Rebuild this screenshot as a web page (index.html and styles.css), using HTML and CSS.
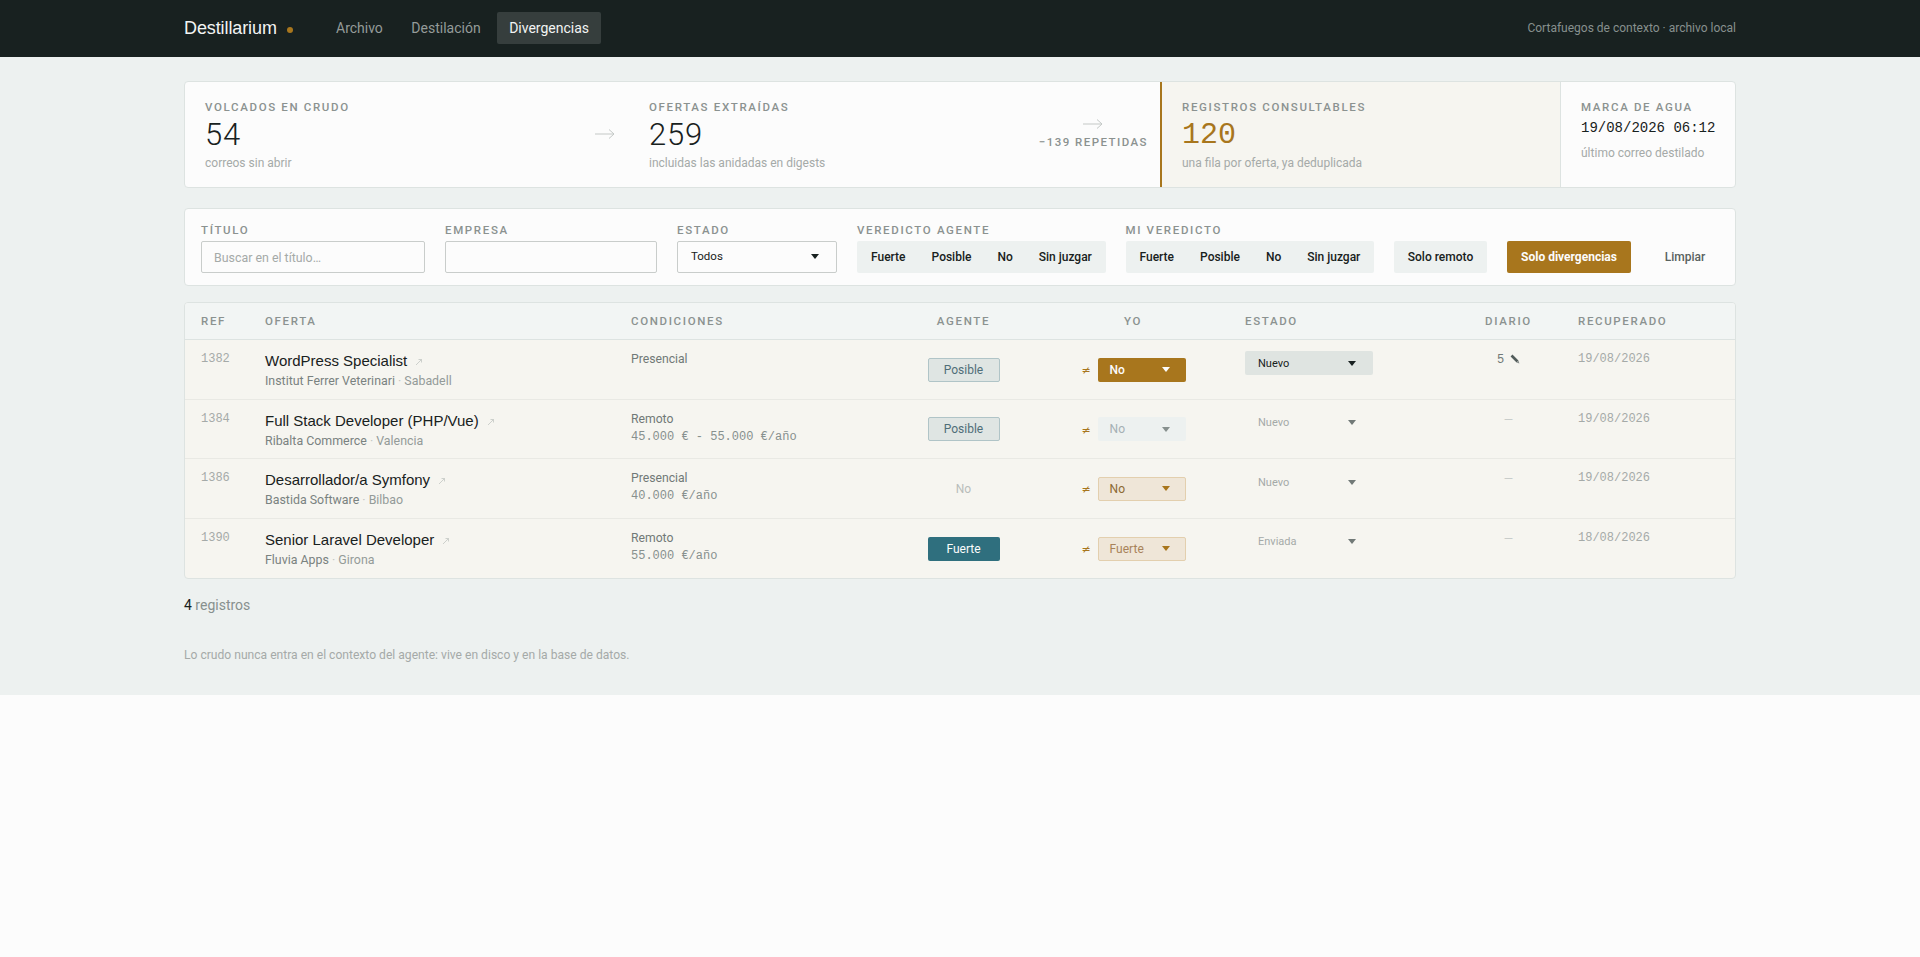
FILE: index.html
```html
<!DOCTYPE html>
<html lang="es">
<head>
<meta charset="utf-8">
<title>Destillarium</title>
<link rel="stylesheet" href="styles.css">
</head>
<body>
<header class="topbar">
  <div class="wrap topbar-in">
    <a class="brand">Destillarium<span class="brand-dot"></span></a>
    <nav class="nav">
      <a class="nav-link">Archivo</a>
      <a class="nav-link">Destilación</a>
      <a class="nav-link is-active">Divergencias</a>
    </nav>
    <span class="tagline">Cortafuegos de contexto · archivo local</span>
  </div>
</header>
<main class="main">
  <div class="wrap">
    <section class="stats">
      <div class="stat stat-a">
        <div class="label">Volcados en crudo</div>
        <div class="num">54</div>
        <div class="hint">correos sin abrir</div>
      </div>
      <div class="flow flow-a">
        <svg class="arrow" viewBox="0 0 20 12" width="20" height="12"><path d="M0 6h19M14 1.5l5 4.5-5 4.5" fill="none" stroke="#c4c8c6" stroke-width="1"/></svg>
      </div>
      <div class="stat stat-b">
        <div class="label">Ofertas extraídas</div>
        <div class="num">259</div>
        <div class="hint">incluidas las anidadas en digests</div>
      </div>
      <div class="flow flow-b">
        <svg class="arrow" viewBox="0 0 20 12" width="20" height="12"><path d="M0 6h19M14 1.5l5 4.5-5 4.5" fill="none" stroke="#c4c8c6" stroke-width="1"/></svg>
        <div class="repeated">−139 repetidas</div>
      </div>
      <div class="stat stat-c">
        <div class="label">Registros consultables</div>
        <div class="num num-mono">120</div>
        <div class="hint">una fila por oferta, ya deduplicada</div>
      </div>
      <div class="stat stat-d">
        <div class="label">Marca de agua</div>
        <div class="mark">19/08/2026 06:12</div>
        <div class="hint">último correo destilado</div>
      </div>
    </section>

    <section class="filters">
      <div class="field f-title">
        <label class="label">Título</label>
        <input class="input" placeholder="Buscar en el título…">
      </div>
      <div class="field f-company">
        <label class="label">Empresa</label>
        <input class="input">
      </div>
      <div class="field f-state">
        <label class="label">Estado</label>
        <div class="select-box"><span>Todos</span><i class="tri"></i></div>
      </div>
      <div class="field f-seg">
        <label class="label">Veredicto agente</label>
        <div class="seg"><span>Fuerte</span><span>Posible</span><span>No</span><span>Sin juzgar</span></div>
      </div>
      <div class="field f-seg">
        <label class="label">Mi veredicto</label>
        <div class="seg"><span>Fuerte</span><span>Posible</span><span>No</span><span>Sin juzgar</span></div>
      </div>
      <button class="btn">Solo remoto</button>
      <button class="btn btn-on">Solo divergencias</button>
      <button class="btn btn-plain">Limpiar</button>
    </section>

    <section class="table-card">
      <table class="table">
        <colgroup>
          <col class="c-ref"><col class="c-offer"><col class="c-cond"><col class="c-agent"><col class="c-me"><col class="c-state"><col class="c-log"><col class="c-date">
        </colgroup>
        <thead>
          <tr>
            <th>Ref</th><th>Oferta</th><th>Condiciones</th><th class="ta-c">Agente</th><th class="ta-c th-me">Yo</th><th>Estado</th><th class="ta-c">Diario</th><th>Recuperado</th>
          </tr>
        </thead>
        <tbody>
          <tr>
            <td class="mono dim">1382</td>
            <td><div class="title">WordPress Specialist<svg class="ext" viewBox="0 0 8 8" width="8" height="8"><path d="M1 7l5.5-5.5M3.5 1.5h3v3" fill="none" stroke="#c3c6c3" stroke-width=".8"/></svg></div><div class="sub">Institut Ferrer Veterinari <em>·</em> <b>Sabadell</b></div></td>
            <td><div class="cond">Presencial</div></td>
            <td class="ta-c va-m"><span class="pill pill-possible">Posible</span></td>
            <td class="va-m"><div class="me"><span class="ne">≠</span><span class="vsel vsel-solid"><span>No</span><i class="tri"></i></span></div></td>
            <td><span class="ssel ssel-on"><span>Nuevo</span><i class="tri"></i></span></td>
            <td class="ta-c log"><span class="log-n">5</span><svg class="pen" viewBox="0 0 10 10" width="10" height="10"><path d="M1.5 1.5L7.5 7.5" fill="none" stroke="#525c5a" stroke-width="2.6"/><path d="M6.5 8.4l2-2 .9 3z" fill="#8a908e"/></svg></td>
            <td class="mono date">19/08/2026</td>
          </tr>
          <tr>
            <td class="mono dim">1384</td>
            <td><div class="title">Full Stack Developer (PHP/Vue)<svg class="ext" viewBox="0 0 8 8" width="8" height="8"><path d="M1 7l5.5-5.5M3.5 1.5h3v3" fill="none" stroke="#c3c6c3" stroke-width=".8"/></svg></div><div class="sub">Ribalta Commerce <em>·</em> <b>Valencia</b></div></td>
            <td><div class="cond">Remoto</div><div class="salary">45.000 € - 55.000 €/año</div></td>
            <td class="ta-c va-m"><span class="pill pill-possible">Posible</span></td>
            <td class="va-m"><div class="me"><span class="ne">≠</span><span class="vsel vsel-muted"><span>No</span><i class="tri"></i></span></div></td>
            <td><span class="ssel"><span>Nuevo</span><i class="tri"></i></span></td>
            <td class="ta-c log-none">—</td>
            <td class="mono date">19/08/2026</td>
          </tr>
          <tr>
            <td class="mono dim">1386</td>
            <td><div class="title">Desarrollador/a Symfony<svg class="ext" viewBox="0 0 8 8" width="8" height="8"><path d="M1 7l5.5-5.5M3.5 1.5h3v3" fill="none" stroke="#c3c6c3" stroke-width=".8"/></svg></div><div class="sub">Bastida Software <em>·</em> <b>Bilbao</b></div></td>
            <td><div class="cond">Presencial</div><div class="salary">40.000 €/año</div></td>
            <td class="ta-c va-m"><span class="pill pill-none">No</span></td>
            <td class="va-m"><div class="me"><span class="ne">≠</span><span class="vsel vsel-soft"><span>No</span><i class="tri"></i></span></div></td>
            <td><span class="ssel"><span>Nuevo</span><i class="tri"></i></span></td>
            <td class="ta-c log-none">—</td>
            <td class="mono date">19/08/2026</td>
          </tr>
          <tr>
            <td class="mono dim">1390</td>
            <td><div class="title">Senior Laravel Developer<svg class="ext" viewBox="0 0 8 8" width="8" height="8"><path d="M1 7l5.5-5.5M3.5 1.5h3v3" fill="none" stroke="#c3c6c3" stroke-width=".8"/></svg></div><div class="sub">Fluvia Apps <em>·</em> <b>Girona</b></div></td>
            <td><div class="cond">Remoto</div><div class="salary">55.000 €/año</div></td>
            <td class="ta-c va-m"><span class="pill pill-strong">Fuerte</span></td>
            <td class="va-m"><div class="me"><span class="ne">≠</span><span class="vsel vsel-soft vsel-soft-fuerte"><span>Fuerte</span><i class="tri"></i></span></div></td>
            <td><span class="ssel"><span>Enviada</span><i class="tri"></i></span></td>
            <td class="ta-c log-none">—</td>
            <td class="mono date">18/08/2026</td>
          </tr>
        </tbody>
      </table>
    </section>

    <p class="count"><strong>4</strong> registros</p>
    <p class="note">Lo crudo nunca entra en el contexto del agente: vive en disco y en la base de datos.</p>
  </div>
</main>
</body>
</html>
```

FILE: styles.css
```css
* { box-sizing: border-box; }
html, body { margin: 0; padding: 0; }
body {
  background: #fcfcfc;
  color: #182120;
  font-family: Roboto, "Noto Sans", sans-serif;
  font-size: 13px;
}
.wrap { width: 1552px; margin: 0 auto; }

.topbar { background: #182120; height: 57px; }
.topbar-in { display: flex; align-items: center; height: 56px; }
.brand {
  font-family: "Liberation Sans", sans-serif;
  font-size: 18px;
  letter-spacing: -0.1px;
  color: #f2f4f3;
  width: 140px;
  display: flex;
  align-items: center;
}
.brand-dot { width: 6px; height: 6px; border-radius: 50%; background: #a8761d; margin: 4px 0 0 10px; }
.nav { display: flex; gap: 4.5px; flex: 1; font-size: 14px; }
.nav-link { color: #949b99; padding: 0 12px; height: 32px; line-height: 32px; border-radius: 2px; }
.nav-link.is-active { background: #363e3d; color: #f2f4f3; }
.tagline { color: #87908e; font-size: 12px; }

.main { background: #edf1f0; padding: 24px 0 32px; height: 638px; }

.stats {
  display: flex;
  height: 107px;
  background: #fcfcfc;
  border: 1px solid #dde3e1;
  border-radius: 4px;
  overflow: hidden;
}
.stat { padding: 18px 0 0 20px; }
.stat-a { width: 400px; }
.flow-a { width: 64px; padding: 46px 0 0 10px; }
.stat-b { width: 0; flex: 1; padding-left: 0; }
.flow-b { width: 122px; padding-top: 36px; display: flex; flex-direction: column; align-items: flex-end; padding-right: 12px; }
.flow-b .arrow { margin-right: 45px; }
.stat-c { width: 400px; background: #f6f5f0; border-left: 2px solid #a8761d; }
.stat-d { width: 175px; border-left: 1px solid #dde3e1; }
.label, .repeated {
  font-size: 11.5px;
  font-weight: 500;
  letter-spacing: 1.65px;
  text-transform: uppercase;
  color: #8b9290;
  line-height: 14px;
}
.label { display: block; }
.num { font-size: 31px; font-weight: 300; letter-spacing: 0.8px; line-height: 38px; margin-top: 2px; color: #182120; }
.num-mono { font-family: "Liberation Mono", monospace; font-size: 30px; font-weight: 400; letter-spacing: 0; color: #a8761d; }
.mark { font-family: "Liberation Mono", monospace; font-size: 14px; line-height: 20px; margin-top: 4px; color: #182120; height: 24px; }
.stat-d .hint { margin-top: 3px; }
.hint { font-size: 12px; color: #a5aaa8; line-height: 16px; margin-top: 1px; }
.repeated { margin-top: 5px; letter-spacing: 1.45px; white-space: nowrap; }

.filters {
  display: flex;
  align-items: flex-end;
  gap: 20px;
  height: 78px;
  margin-top: 20px;
  padding: 0 16px 12px;
  background: #fcfcfc;
  border: 1px solid #dde3e1;
  border-radius: 4px;
}
.filters > * { flex: none; }
.field { display: flex; flex-direction: column; gap: 4px; }
.f-title { width: 224px; }
.f-company { width: 212px; }
.f-state { width: 160px; }
.f-seg { width: 248.5px; }
.input {
  height: 32px;
  width: 100%;
  border: 1px solid #c9cdcb;
  border-radius: 2px;
  background: #fcfcfc;
  padding: 0 12px;
  font: 12.4px Roboto, sans-serif;
  color: #182120;
}
.input::placeholder { color: #a5aaa8; opacity: 1; }
.select-box {
  height: 32px;
  border: 1px solid #c9cdcb;
  border-radius: 2px;
  display: flex;
  align-items: center;
  justify-content: space-between;
  padding: 0 17px 2px 13px;
  font-size: 11.5px;
}
.tri { display: block; width: 0; height: 0; border-left: 4px solid transparent; border-right: 4px solid transparent; border-top: 5px solid currentColor; }
.seg { display: flex; justify-content: space-between; height: 32px; background: #edf1f0; border-radius: 2px; padding: 0 1px; }
.seg span { display: flex; align-items: center; padding: 0 13px; font-size: 12px; font-weight: 500; color: #182120; white-space: nowrap; }
.btn {
  height: 32px;
  border: 0;
  border-radius: 2px;
  background: #edf1f0;
  color: #182120;
  font: 500 12px Roboto, sans-serif;
  width: 93px;
  padding: 0;
  white-space: nowrap;
}
.btn-on { width: 124px; background: #a8761d; color: #fcfcfc; font-weight: 700; }
.btn-plain { width: 68px; background: transparent; color: #59625f; }

.table-card {
  margin-top: 16px;
  background: #f6f5f0;
  border: 1px solid #dde3e1;
  border-radius: 4px;
  overflow: hidden;
}
.table { width: 100%; border-collapse: separate; border-spacing: 0; table-layout: fixed; }
.c-ref { width: 64px; }
.c-offer { width: 366px; }
.c-cond { width: 280px; }
.c-agent { width: 137px; }
.c-me { width: 197px; }
.c-state { width: 226px; }
.c-log { width: 107px; }
.table th {
  height: 37px;
  background: #f2f5f4;
  border-bottom: 1px solid #dde3e1;
  padding: 0 16px;
  text-align: left;
  font-size: 11.5px;
  font-weight: 500;
  letter-spacing: 1.65px;
  text-transform: uppercase;
  color: #8b9290;
}
.table th.ta-c, .ta-c { text-align: center; }
.table th.th-me { padding-left: 21px; }
.table td {
  height: 59.5px;
  padding: 11px 16px 0;
  vertical-align: top;
  border-bottom: 1px solid #e9e9e4;
}
.table tr:last-child td { border-bottom: 0; }
.table td.va-m { vertical-align: middle; padding-top: 1px; padding-bottom: 0; }
.mono { font-family: "Liberation Mono", monospace; font-size: 12px; }
.table td.mono { padding-top: 12px; line-height: 14px; }
.dim { color: #a5aaa8; }
.date { color: #a5aaa8; }
.title { font-family: "Liberation Sans", sans-serif; font-size: 15px; line-height: 20px; color: #182120; display: flex; align-items: center; }
.ext { margin-left: 8px; margin-top: 2px; }
.sub { font-size: 12.4px; line-height: 16px; margin-top: 2px; color: #7a8280; }
.sub em { font-style: normal; color: #c3c6c3; }
.sub b { font-weight: 400; color: #949b99; }
.cond { font-size: 12.2px; line-height: 16px; color: #717977; }
.salary { font-family: "Liberation Mono", monospace; font-size: 12px; line-height: 16px; margin-top: 2px; color: #87908e; }
.pill { display: inline-flex; align-items: center; justify-content: center; width: 72px; height: 24px; border-radius: 2px; font-size: 12px; }
.pill-possible { background: #dfe5e3; border: 1px solid #b0c4c7; color: #4f6e78; }
.pill-none { color: #b9bdbb; }
.pill-strong { background: #2f6f7e; color: #fcfcfc; }
.me { display: flex; align-items: center; justify-content: center; gap: 7px; padding-left: 6px; }
.ne { font-family: "DejaVu Sans", sans-serif; color: #a8761d; font-size: 11px; margin-top: 2px; }
.vsel { width: 88px; height: 24px; border-radius: 2px; display: flex; align-items: center; justify-content: space-between; padding: 0 15px 0 11px; font-size: 12px; border: 1px solid transparent; }
.vsel-solid { background: #a8761d; color: #fcfcfc; font-weight: 500; }
.vsel-muted { background: #edf1f0; color: #a5b0b4; }
.vsel-muted .tri { color: #87908e; }
.vsel-soft { background: #efe6d8; border-color: #e3cfae; color: #8c6a33; }
.vsel-soft .tri { color: #a8761d; }
.vsel-soft-fuerte { color: #a8835a; }
.ssel { display: flex; align-items: center; justify-content: space-between; width: 128px; height: 24px; border-radius: 2px; padding: 0 17px 0 13px; font-size: 11px; color: #a5aaa8; }
.ssel .tri { color: #717977; }
.ssel-on { background: #dfe4e1; color: #182120; }
.ssel-on .tri { color: #182120; }
.table td.log { padding-top: 13px; color: #717977; font-family: "Liberation Mono", monospace; font-size: 12px; line-height: 14px; }
.log-n { margin-right: 6px; }
.pen { vertical-align: -1px; }
.table td.log-none { color: #c9cdcb; font-size: 12px; padding-top: 13px; line-height: 14px; }

.count { margin: 17px 0 0; font-size: 14px; line-height: 18px; color: #87908e; }
.count strong { font-weight: 400; color: #182120; }
.note { margin: 33px 0 0; font-size: 12.1px; line-height: 16px; color: #a5aaa8; }
```
